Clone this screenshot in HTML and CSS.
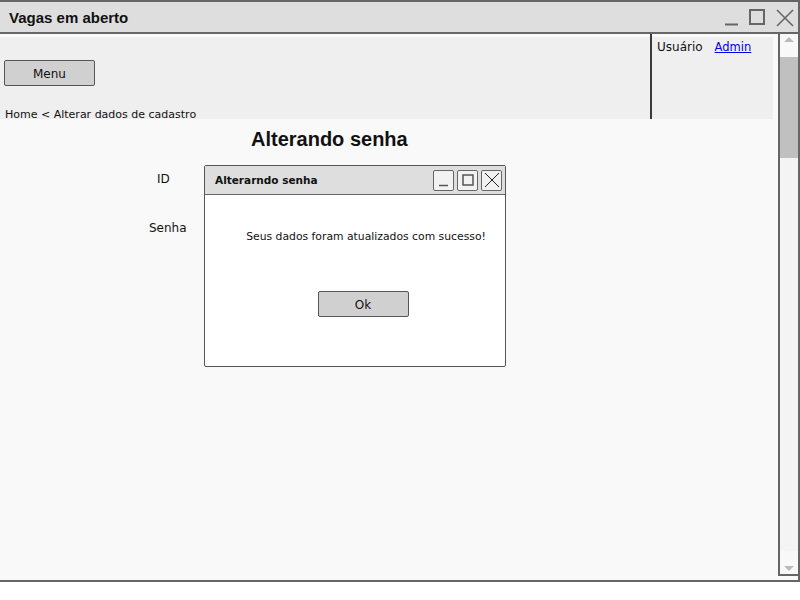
FILE: index.html
```html
<!DOCTYPE html>
<html lang="pt">
<head>
<meta charset="utf-8">
<title>Vagas em aberto</title>
<link rel="stylesheet" href="styles.css">
</head>
<body>
<div class="window">
  <div class="titlebar">
    <span class="win-title">Vagas em aberto</span>
    <div class="win-controls">
      <svg class="ctl" width="16" height="18" viewBox="0 0 16 18"><path d="M1 15.5 H14" stroke="#666" stroke-width="2"/></svg>
      <svg class="ctl" width="18" height="18" viewBox="0 0 18 18"><rect x="1" y="1" width="14" height="14" fill="none" stroke="#666" stroke-width="2"/></svg>
      <svg class="ctl" width="18" height="18" viewBox="0 0 18 18"><path d="M1 1 L17 17 M17 1 L1 17" stroke="#666" stroke-width="1.6"/></svg>
    </div>
  </div>
  <div class="winbody">
    <div class="main">
      <div class="header">
        <div class="header-left">
          <button class="btn menu-btn">Menu</button>
          <div class="crumb">Home &lt; Alterar dados de cadastro</div>
        </div>
        <div class="divider"></div>
        <div class="header-right">
          <span class="user">Usuário</span><a class="admin" href="#">Admin</a>
        </div>
      </div>
      <h1 class="page-title">Alterando senha</h1>
      <div class="form">
        <div class="label lbl-id">ID</div>
        <div class="label lbl-senha">Senha</div>
      </div>
      <div class="dialog">
        <div class="dlg-bar">
          <span class="dlg-title">Alterarndo senha</span>
          <div class="dlg-ctls">
            <span class="dbtn"><svg width="18" height="18" viewBox="0 0 18 18"><path d="M4 14.5 H13" stroke="#555" stroke-width="1.5"/></svg></span>
            <span class="dbtn"><svg width="18" height="18" viewBox="0 0 18 18"><rect x="4" y="4" width="10" height="10" fill="none" stroke="#555" stroke-width="1.5"/></svg></span>
            <span class="dbtn"><svg width="18" height="18" viewBox="0 0 18 18"><path d="M2 2 L16 16 M16 2 L2 16" stroke="#222" stroke-width="1"/></svg></span>
          </div>
        </div>
        <div class="dlg-body">
          <p class="dlg-msg">Seus dados foram atualizados com sucesso!</p>
          <button class="btn ok-btn">Ok</button>
        </div>
      </div>
    </div>
    <div class="scrollbar">
      <div class="arrow up"></div>
      <div class="thumb"></div>
      <div class="track"></div>
      <div class="arrow down"></div>
    </div>
  </div>
</div>
</body>
</html>
```

FILE: styles.css
```css
html, body {
  margin: 0;
  padding: 0;
  background: #ffffff;
}
.window {
  width: 800px;
  height: 582px;
  box-sizing: border-box;
  border-top: 2px solid #666;
  border-right: 2px solid #666;
  border-bottom: 2px solid #666;
  display: flex;
  flex-direction: column;
  font-family: "DejaVu Sans", sans-serif;
  color: #111;
}
.titlebar {
  height: 30px;
  background: #dedede;
  border-bottom: 2px solid #666;
  display: flex;
  align-items: center;
  justify-content: space-between;
  flex-shrink: 0;
}
.win-title {
  font-family: "Liberation Sans", Arial, sans-serif;
  font-weight: bold;
  font-size: 15px;
  margin-left: 9px;
  color: #111;
}
.win-controls {
  display: flex;
  align-items: center;
  gap: 9px;
  margin-right: 4px;
  margin-top: 2px;
}
.winbody {
  flex: 1;
  display: flex;
  background: #f9f9f9;
  min-height: 0;
}
.main {
  flex: 1;
  position: relative;
}
.header {
  display: flex;
  height: 85px;
  margin-right: 5px;
}
.header-left {
  width: 650px;
  margin-top: 3px;
  background: #efefef;
  padding: 23px 0 0 4px;
  box-sizing: border-box;
}
.divider {
  width: 2px;
  background: #3a3a3a;
}
.header-right {
  flex: 1;
  margin-top: 3px;
  background: #efefef;
  padding: 3px 0 0 5px;
  font-size: 12px;
}
.admin {
  color: #0000ee;
  margin-left: 12px;
  font-size: 11.5px;
}
.btn {
  background: #d0d0d0;
  border: 1.5px solid #555;
  border-radius: 2px;
  font-family: "DejaVu Sans", sans-serif;
  font-size: 12px;
  color: #111;
  padding: 2px 0 0;
}
.menu-btn {
  width: 91px;
  height: 26px;
  display: block;
}
.crumb {
  font-size: 11px;
  margin-top: 22px;
  margin-left: 1px;
}
.page-title {
  font-family: "Liberation Sans", Arial, sans-serif;
  font-size: 20px;
  font-weight: bold;
  margin: 9px 0 0 251px;
  color: #111;
}
.form {
  position: relative;
  height: 100px;
}
.label {
  font-size: 12px;
  position: absolute;
}
.lbl-id { left: 157px; top: 21px; }
.lbl-senha { left: 149px; top: 70px; }
.dialog {
  position: absolute;
  left: 204px;
  top: 131px;
  width: 302px;
  height: 202px;
  box-sizing: border-box;
  border: 1.5px solid #555;
  border-radius: 2px;
  background: #ffffff;
  display: flex;
  flex-direction: column;
}
.dlg-bar {
  height: 28px;
  background: #dedede;
  border-bottom: 1.5px solid #666;
  display: flex;
  align-items: center;
  justify-content: space-between;
}
.dlg-title {
  font-weight: bold;
  font-size: 10.5px;
  margin-left: 10px;
}
.dlg-ctls {
  display: flex;
  gap: 3px;
  margin-right: 3px;
}
.dbtn {
  width: 21px;
  height: 21px;
  box-sizing: border-box;
  border: 1.5px solid #666;
  border-radius: 2px;
  background: #f2f2f2;
  display: flex;
  align-items: center;
  justify-content: center;
}
.dlg-body {
  flex: 1;
  display: flex;
  flex-direction: column;
  align-items: center;
}
.dlg-msg {
  font-size: 10.8px;
  margin: 35px 0 0 22px;
  white-space: nowrap;
}
.ok-btn {
  width: 91px;
  height: 26px;
  margin-top: 48px;
  margin-left: 16px;
}
.scrollbar {
  width: 20px;
  box-sizing: border-box;
  border-left: 2px solid #666;
  border-bottom: 2px solid #666;
  margin-bottom: 4px;
  background: #f4f4f4;
  display: flex;
  flex-direction: column;
}
.arrow {
  height: 23px;
  position: relative;
  background: #f8f8f8;
}
.arrow.up::after, .arrow.down::after {
  content: "";
  position: absolute;
  left: 4px;
  border-left: 5px solid transparent;
  border-right: 5px solid transparent;
}
.arrow.up::after {
  top: 3px;
  border-bottom: 5px solid #bbb;
}
.arrow.down::after {
  bottom: 3px;
  border-top: 5px solid #bbb;
}
.thumb {
  height: 101px;
  background: #c0c0c0;
}
.track {
  flex: 1;
}
```
